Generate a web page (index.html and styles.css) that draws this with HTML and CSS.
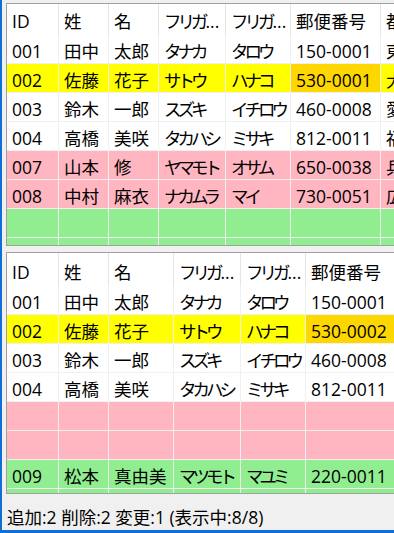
FILE: index.html
```html
<!DOCTYPE html>
<html lang="ja">
<head>
<meta charset="utf-8">
<title>差分比較</title>
<link rel="stylesheet" href="styles.css">
</head>
<body>
<div class="window">
  <div class="content">
    <div class="grid grid-a">
      <div class="row head">
        <div class="cell">ID</div><div class="cell">姓</div><div class="cell">名</div><div class="cell kana">フリガ<span class="dots">...</span></div><div class="cell kana">フリガ<span class="dots">...</span></div><div class="cell">郵便番号</div><div class="cell">都道府県</div>
      </div>
      <div class="row">
        <div class="cell">001</div><div class="cell">田中</div><div class="cell">太郎</div><div class="cell kana">タナカ</div><div class="cell kana">タロウ</div><div class="cell">150-0001</div><div class="cell">東京都</div>
      </div>
      <div class="row yellow">
        <div class="cell">002</div><div class="cell">佐藤</div><div class="cell">花子</div><div class="cell kana">サトウ</div><div class="cell kana">ハナコ</div><div class="cell gold">530-0001</div><div class="cell">大阪府</div>
      </div>
      <div class="row">
        <div class="cell">003</div><div class="cell">鈴木</div><div class="cell">一郎</div><div class="cell kana">スズキ</div><div class="cell kana">イチロウ</div><div class="cell">460-0008</div><div class="cell">愛知県</div>
      </div>
      <div class="row">
        <div class="cell">004</div><div class="cell">高橋</div><div class="cell">美咲</div><div class="cell kana">タカハシ</div><div class="cell kana">ミサキ</div><div class="cell">812-0011</div><div class="cell">福岡県</div>
      </div>
      <div class="row pink">
        <div class="cell">007</div><div class="cell">山本</div><div class="cell">修</div><div class="cell kana">ヤマモト</div><div class="cell kana">オサム</div><div class="cell">650-0038</div><div class="cell">兵庫県</div>
      </div>
      <div class="row pink">
        <div class="cell">008</div><div class="cell">中村</div><div class="cell">麻衣</div><div class="cell kana">ナカムラ</div><div class="cell kana">マイ</div><div class="cell">730-0051</div><div class="cell">広島県</div>
      </div>
      <div class="row green">
        <div class="cell"></div><div class="cell"></div><div class="cell"></div><div class="cell"></div><div class="cell"></div><div class="cell"></div><div class="cell"></div>
      </div>
      <div class="row green">
        <div class="cell"></div><div class="cell"></div><div class="cell"></div><div class="cell"></div><div class="cell"></div><div class="cell"></div><div class="cell"></div>
      </div>
    </div>

    <div class="grid grid-b">
      <div class="row head">
        <div class="cell">ID</div><div class="cell">姓</div><div class="cell">名</div><div class="cell kana">フリガ<span class="dots">...</span></div><div class="cell kana">フリガ<span class="dots">...</span></div><div class="cell">郵便番号</div><div class="cell">都道府県</div>
      </div>
      <div class="row">
        <div class="cell">001</div><div class="cell">田中</div><div class="cell">太郎</div><div class="cell kana">タナカ</div><div class="cell kana">タロウ</div><div class="cell">150-0001</div><div class="cell">東京都</div>
      </div>
      <div class="row yellow">
        <div class="cell">002</div><div class="cell">佐藤</div><div class="cell">花子</div><div class="cell kana">サトウ</div><div class="cell kana">ハナコ</div><div class="cell gold">530-0002</div><div class="cell">大阪府</div>
      </div>
      <div class="row">
        <div class="cell">003</div><div class="cell">鈴木</div><div class="cell">一郎</div><div class="cell kana">スズキ</div><div class="cell kana">イチロウ</div><div class="cell">460-0008</div><div class="cell">愛知県</div>
      </div>
      <div class="row">
        <div class="cell">004</div><div class="cell">高橋</div><div class="cell">美咲</div><div class="cell kana">タカハシ</div><div class="cell kana">ミサキ</div><div class="cell">812-0011</div><div class="cell">福岡県</div>
      </div>
      <div class="row pink">
        <div class="cell"></div><div class="cell"></div><div class="cell"></div><div class="cell"></div><div class="cell"></div><div class="cell"></div><div class="cell"></div>
      </div>
      <div class="row pink">
        <div class="cell"></div><div class="cell"></div><div class="cell"></div><div class="cell"></div><div class="cell"></div><div class="cell"></div><div class="cell"></div>
      </div>
      <div class="row green">
        <div class="cell">009</div><div class="cell">松本</div><div class="cell">真由美</div><div class="cell kana">マツモト</div><div class="cell kana">マユミ</div><div class="cell">220-0011</div><div class="cell">神奈川県</div>
      </div>
      <div class="row green">
        <div class="cell"></div><div class="cell"></div><div class="cell"></div><div class="cell"></div><div class="cell"></div><div class="cell"></div><div class="cell"></div>
      </div>
    </div>
  </div>
  <div class="status">追加:2 削除:2 変更:1 (表示中:8/8)</div>
</div>
</body>
</html>
```

FILE: styles.css
```css
html, body {
  margin: 0;
  padding: 0;
  height: 100%;
  overflow: hidden;
}

body {
  background: #f0f0f0;
  color: #000;
  font-family: "Open Sans", "Noto Sans CJK JP", sans-serif;
  font-size: 17.5px;
}

.window {
  box-sizing: border-box;
  height: 533px;
  border-left: 2px solid #0f6fd6;
  border-bottom: 3px solid #0f6fd6;
  display: flex;
  flex-direction: column;
}

.content {
  display: flex;
  flex-direction: column;
  gap: 6px;
  padding: 3px 0 0 4px;
}

.grid {
  background: #fff;
  border: 1px solid #a0a0a0;
  border-right: none;
  overflow: hidden;
  white-space: nowrap;
}

.grid-a { height: 241px; }
.grid-b { height: 240px; }

.row {
  display: grid;
}

.grid-a .row {
  grid-template-columns: 52px 50px 50px 67px 65px 90px 120px;
}

.grid-b .row {
  grid-template-columns: 52px 50px 65px 67px 65px 90px 120px;
}

.cell {
  box-sizing: border-box;
  height: 29px;
  padding: 5px 0 0 5px;
  line-height: 22px;
  border-right: 1px solid #f0f0f0;
  border-bottom: 1px solid #f0f0f0;
  overflow: hidden;
}

.cell.kana {
  letter-spacing: -4px;
}

.cell.kana .dots {
  letter-spacing: 0;
  margin-left: 1px;
}

.head .cell {
  height: 31px;
  padding-top: 6px;
  border-bottom: none;
  border-right-color: #e5e5e5;
}

.grid-b .head .cell {
  height: 33px;
  padding-top: 8px;
}

.yellow .cell { background: #ffff00; }
.yellow .cell.gold { background: #ffd700; }
.pink .cell { background: #ffb6c1; }
.green .cell { background: #90ee90; }

.status {
  flex: 1;
  display: flex;
  align-items: center;
  padding: 8px 0 0 5px;
}
```
